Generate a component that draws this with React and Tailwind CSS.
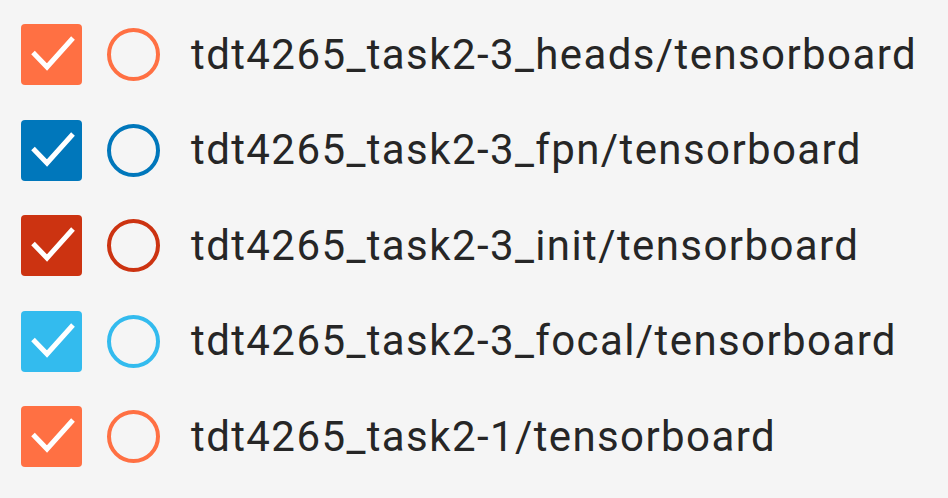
import React from 'react';

const runs = [
    { name: 'tdt4265_task2-3_heads/tensorboard', box: 'bg-[#ff7043]', ring: 'border-[#ff7043]' },
    { name: 'tdt4265_task2-3_fpn/tensorboard', box: 'bg-[#0077bb]', ring: 'border-[#0077bb]' },
    { name: 'tdt4265_task2-3_init/tensorboard', box: 'bg-[#cc3311]', ring: 'border-[#cc3311]' },
    { name: 'tdt4265_task2-3_focal/tensorboard', box: 'bg-[#33bbee]', ring: 'border-[#33bbee]' },
    { name: 'tdt4265_task2-1/tensorboard', box: 'bg-[#ff7043]', ring: 'border-[#ff7043]' },
];

const Check = ({ cls }) => (
    <div className={`w-[61px] h-[61px] rounded-[4px] shrink-0 ${cls}`}>
        <svg width="61" height="61" viewBox="0 0 61 61" fill="none">
            <path d="M12 28.5L26 43L52 14" stroke="white" strokeWidth="5" />
        </svg>
    </div>
);

const Ring = ({ cls }) => (
    <div className={`w-[53px] h-[53px] rounded-full border-[4.5px] shrink-0 ml-[25px] ${cls}`} />
);

export default function App() {
    return (
        <div className="w-[948px] h-[498px] bg-[#f5f5f5] overflow-hidden pt-[7px] pl-[21px] font-['Roboto',sans-serif]">
            {runs.map((run, i) => (
                <div key={i} className="flex items-center h-[95.5px]">
                    <Check cls={run.box} />
                    <Ring cls={run.ring} />
                    <span className="ml-[31px] text-[42px] tracking-[1.4px] text-[#262626] whitespace-nowrap leading-none">{run.name}</span>
                </div>
            ))}
        </div>
    );
}
